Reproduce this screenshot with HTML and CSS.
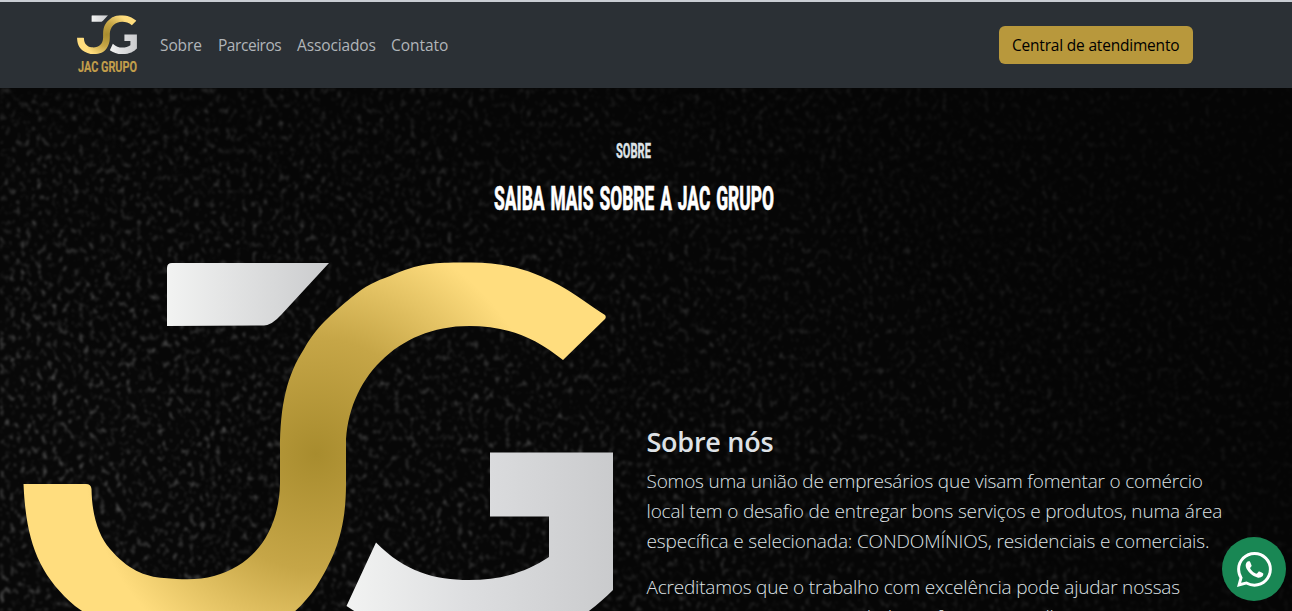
FILE: index.html
```html
<!DOCTYPE html>
<html lang="pt-BR">
<head>
<meta charset="utf-8">
<title>JAC Grupo</title>
<link rel="stylesheet" href="styles.css">
</head>
<body>
<svg class="defs" width="0" height="0" aria-hidden="true">
  <defs>
    <radialGradient id="gold" gradientUnits="userSpaceOnUse" cx="316" cy="454" r="232">
      <stop offset="0" stop-color="#a88c2e"/>
      <stop offset=".5" stop-color="#c6a647"/>
      <stop offset="1" stop-color="#ffdd7e"/>
    </radialGradient>
    <linearGradient id="silverTop" gradientUnits="userSpaceOnUse" x1="167" y1="0" x2="329" y2="0">
      <stop offset="0" stop-color="#f2f3f2"/><stop offset="1" stop-color="#cacbcd"/>
    </linearGradient>
    <linearGradient id="silverG" gradientUnits="userSpaceOnUse" x1="347" y1="0" x2="613" y2="0">
      <stop offset="0" stop-color="#f2f3f2"/><stop offset=".45" stop-color="#dddee0"/><stop offset="1" stop-color="#cacbcd"/>
    </linearGradient>
    <symbol id="mark" viewBox="23 262 591 390">
      <path fill="url(#silverTop)" d="M172 263H329L281 315Q272 325 264 325.500L167 326V268Q167 263 172 263Z"/>
      <path fill="url(#gold)" d="M23.500 484H86Q91 484 91.500 489C92 517 99 536 110 549C127 569 145 577 164 578C185 580 200 580 214 576C256 565 279 529 280 484V450C280 405 287 375 304 349C314 331 325 319 352 297C365 286 376 281 390 276C420 262 440 262.500 468 262.500C508 262 535 272 559 285C577 295 589 305 605 315Q606.500 317 605 319L563 360C532 335 504 326 469 326C397 326 347 380 346 445V484C346 530 335 557 316 587C288 628 247 645 190 645C143 645 105 628 75 606C39 575 26 542 23.500 484Z"/>
      <path fill="url(#silverG)" d="M490 452.500H613V590C583 620 545 645 470 645C417 645 378 627 346.500 606L376 542.500C405 572 435 580 469 580C502 580 526 572 549 557V516.500H490Z"/>
    </symbol>
  </defs>
</svg>

<header class="navbar">
  <a class="brand" href="#">
    <svg class="brand-mark" viewBox="0 0 591 390"><use href="#mark" width="591" height="390"/></svg>
    <svg class="brand-name" viewBox="0 0 60 16"><text x="1" y="13" textLength="59" lengthAdjust="spacingAndGlyphs">JAC GRUPO</text></svg>
  </a>
  <nav class="links">
    <a class="l1" href="#">Sobre</a>
    <a class="l2" href="#">Parceiros</a>
    <a class="l3" href="#">Associados</a>
    <a class="l4" href="#">Contato</a>
  </nav>
  <a class="button" href="#">Central de atendimento</a>
</header>

<main class="about">
  <svg class="texture" width="1292" height="523" aria-hidden="true">
    <defs>
      <filter id="grain" x="0" y="0" width="100%" height="100%" color-interpolation-filters="sRGB">
        <feTurbulence type="fractalNoise" baseFrequency=".19 .15" numOctaves="3" seed="8"/>
        <feColorMatrix values="0 0 0 0 1  0 0 0 0 1  0 0 0 0 1  1.300 1.100 0 0 -1.260"/>
        <feGaussianBlur stdDeviation=".8"/>
      </filter>
      <linearGradient id="fade"><stop offset="0" stop-color="#fff"/><stop offset=".5" stop-color="#999"/><stop offset="1" stop-color="#333"/></linearGradient>
      <linearGradient id="fadeTop" x2="0" y2="1"><stop offset="0" stop-opacity=".4"/><stop offset=".6" stop-opacity="0"/></linearGradient>
      <mask id="light"><rect width="1292" height="523" fill="url(#fade)"/><rect width="1292" height="523" fill="url(#fadeTop)"/></mask>
    </defs>
    <g mask="url(#light)"><rect width="1292" height="523" fill="#fff" opacity=".015"/><rect width="1292" height="523" filter="url(#grain)" opacity=".5"/></g>
  </svg>
  <div class="titles">
    <h5><svg width="40" height="24"><text x="2" y="18" textLength="35" lengthAdjust="spacingAndGlyphs">SOBRE</text></svg></h5>
    <h2><svg width="290" height="42"><text x="5" y="31" textLength="280" lengthAdjust="spacingAndGlyphs">SAIBA MAIS SOBRE A JAC GRUPO</text></svg></h2>
  </div>
  <div class="columns">
    <svg class="hero-mark" viewBox="0 0 591 390"><use href="#mark" width="591" height="390"/></svg>
    <article class="copy">
      <h3>Sobre nós</h3>
      <p><span class="p1">Somos uma união de empresários que visam fomentar o comércio</span>
      <span class="p2">local tem o desafio de entregar bons serviços e produtos, numa área</span>
      <span class="p3">específica e selecionada: CONDOMÍNIOS, residenciais e comerciais.</span></p>
      <p><span class="p4">Acreditamos que o trabalho com excelência pode ajudar nossas</span>
      <span class="p5">empresas e a nossa sociedade e a fomentar melhores iniciativas</span></p>
    </article>
  </div>
</main>

<a class="whatsapp" href="#" aria-label="WhatsApp">
  <svg viewBox="0 0 16 16"><path d="M13.601 2.326A7.854 7.854 0 0 0 7.994 0C3.627 0 .068 3.558.064 7.926c0 1.399.366 2.760 1.057 3.965L0 16l4.204-1.102a7.933 7.933 0 0 0 3.790.965h.004c4.368 0 7.926-3.558 7.930-7.930A7.898 7.898 0 0 0 13.600 2.326zM7.994 14.521a6.573 6.573 0 0 1-3.356-.920l-.240-.144-2.494.654.666-2.433-.156-.251a6.560 6.560 0 0 1-1.007-3.505c0-3.626 2.957-6.584 6.591-6.584a6.560 6.560 0 0 1 4.660 1.931 6.557 6.557 0 0 1 1.928 4.660c-.004 3.639-2.961 6.592-6.592 6.592zm3.615-4.934c-.197-.099-1.170-.578-1.353-.646-.182-.065-.315-.099-.445.099-.133.197-.513.646-.627.775-.114.133-.232.148-.430.050-.197-.100-.836-.308-1.592-.985-.590-.525-.985-1.175-1.103-1.372-.114-.198-.011-.304.088-.403.087-.088.197-.232.296-.346.100-.114.133-.198.198-.330.065-.134.034-.248-.015-.347-.050-.099-.445-1.076-.612-1.470-.160-.389-.323-.335-.445-.340-.114-.007-.247-.007-.380-.007a.729.729 0 0 0-.529.247c-.182.198-.691.677-.691 1.654 0 .977.710 1.916.810 2.049.098.133 1.394 2.132 3.383 2.992.470.205.840.326 1.129.418.475.152.904.129 1.246.080.380-.058 1.171-.480 1.338-.943.164-.464.164-.860.114-.943-.049-.084-.182-.133-.380-.232z"/></svg>
</a>
</body>
</html>
```
FILE: styles.css
```css
* { box-sizing: border-box; }
body {
  margin: 0;
  height: 611px;
  overflow: hidden;
  display: flex;
  flex-direction: column;
  background: #050505;
  color: #dee2e6;
  font-family: "Open Sans", "Noto Sans", sans-serif;
}
a { text-decoration: none; }
.defs { position: absolute; }
.navbar {
  flex: 0 0 88px;
  display: flex;
  align-items: center;
  padding: 0 99px 0 77px;
  background: #2b3035;
  border-top: 2px solid #c9cdd3;
}
.brand { width: 60px; height: 62px; display: flex; flex-direction: column; margin-top: -1px; }
.brand-mark { flex: none; width: 60px; height: 40px; margin-top: 1px; }
.brand-name { flex: none; width: 60px; height: 16px; margin-top: 4px; overflow: visible; }
.brand-name text { font: bold 15.500px Roboto, sans-serif; fill: #c39f4b; stroke: #c39f4b; stroke-width: .2px; }
.links { display: flex; flex: 1; gap: 16px; margin-left: 23px; }
.links a { color: #b1b5b9; font-size: 15.500px; line-height: 24px; white-space: nowrap; }
.l1 { width: 42px; letter-spacing: -.1px; }
.l2 { width: 63px; letter-spacing: -.45px; }
.l3 { width: 78px; letter-spacing: -.13px; }
.l4 { width: 57px; letter-spacing: -.05px; }
.button {
  width: 194px;
  height: 38px;
  border-radius: 6px;
  background: #b8983c;
  color: #000;
  font-size: 15.500px;
  line-height: 38px;
  padding-left: 13px;
  letter-spacing: -.2px;
  white-space: nowrap;
}
.about { position: relative; flex: 1; min-height: 0; overflow: hidden; }
.texture { position: absolute; left: 0; top: 0; z-index: -1; }
.titles { display: flex; flex-direction: column; align-items: center; width: 1268px; height: 127px; padding-top: 52px; }
.titles h5, .titles h2 { margin: 0; font-size: 0; }
.titles h2 { margin-top: 15px; }
.titles svg { overflow: visible; }
.titles text { font-family: Roboto, sans-serif; font-weight: 800; word-spacing: 3px; }
.titles h5 text { font-size: 21px; fill: #dee2e6; stroke: #dee2e6; stroke-width: .3px; }
.titles h2 text { font-size: 34px; fill: #fff; stroke: #fff; stroke-width: .6px; }
.columns { display: flex; align-items: flex-start; gap: 33px; padding: 47px 0 0 23px; }
.hero-mark { flex: 0 0 591px; height: 390px; }
.copy { flex: 1; padding-top: 163px; margin-left: -0.5px; }
.copy h3 { margin: 0 0 7px; font-size: 27px; line-height: 34px; font-weight: 600; letter-spacing: -.25px; }
.copy p { margin: 0 0 16px; font-size: 19px; line-height: 30px; font-weight: 300; }
.copy span { display: block; white-space: nowrap; }
.p1, .p4, .p5 { letter-spacing: -.205px; }
.p2 { letter-spacing: -.16px; }
.p3 { letter-spacing: -.15px; }
.whatsapp {
  position: fixed;
  left: 1222px;
  top: 537px;
  width: 64px;
  height: 64px;
  border-radius: 50%;
  background: #198754;
  display: grid;
  place-items: center;
}
.whatsapp svg { width: 35px; height: 35px; fill: #fff; }
```
